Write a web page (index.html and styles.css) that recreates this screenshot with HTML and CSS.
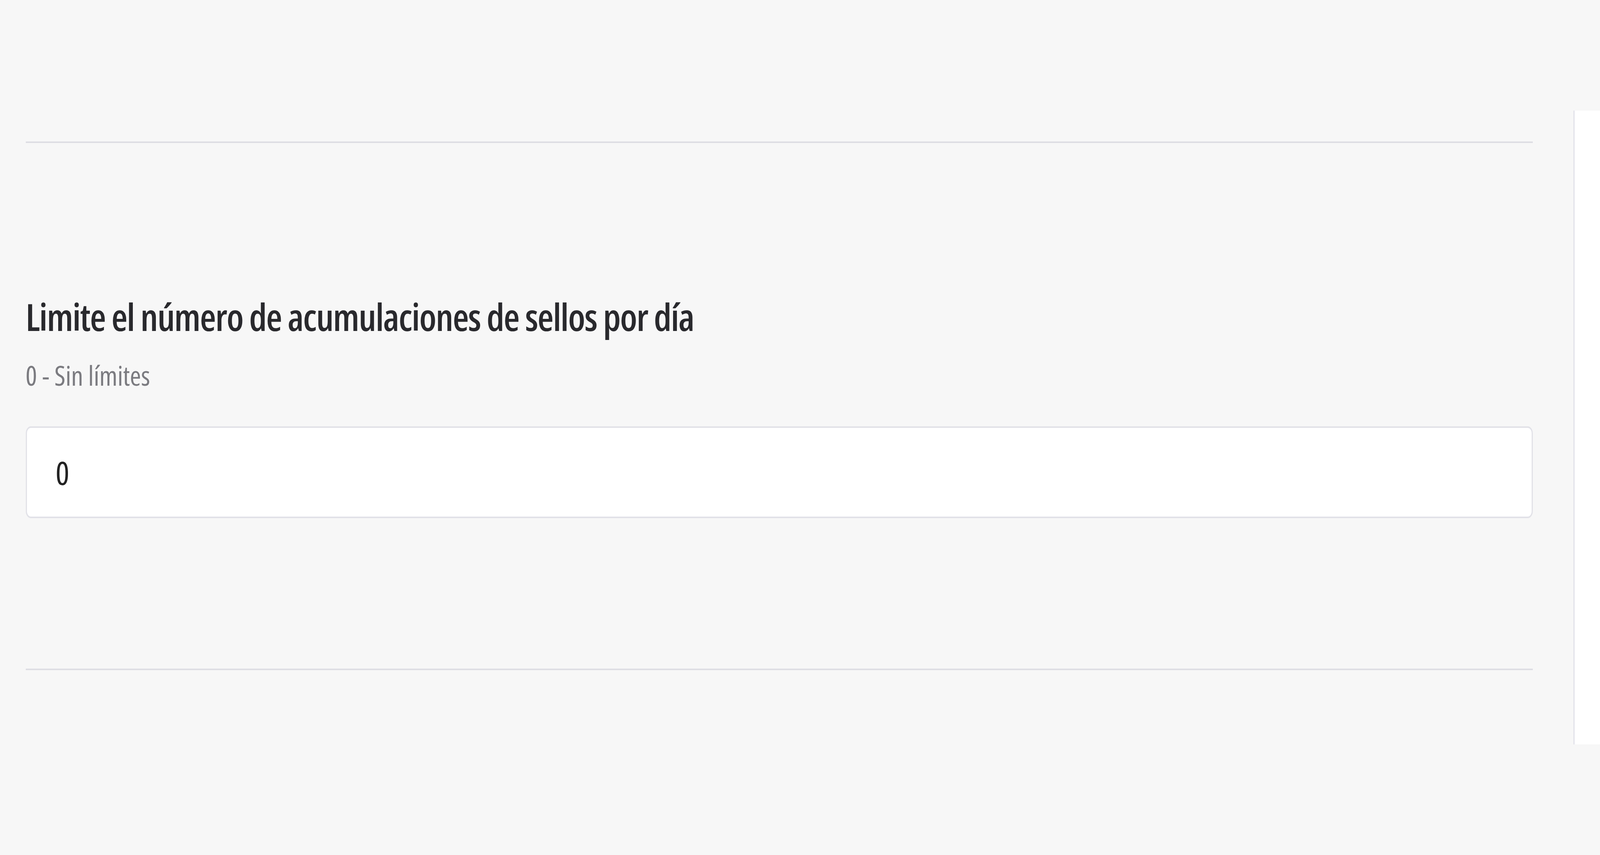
FILE: index.html
```
<!DOCTYPE html>
<html lang="es">

<head>
    <meta charset="UTF-8">
    <meta name="viewport" content="width=device-width, initial-scale=1.0">
    <title>Límite de sellos</title>
    <link rel="stylesheet" href="styles.css">
</head>

<body>

    <div class="layout">
        <main class="settings">
            <section class="setting">
                <label class="setting__title" for="limit">Limite el número de acumulaciones de sellos por día</label>
                <div class="setting__hint">0 - Sin límites</div>
                <input type="number" class="setting__input" id="limit" value="0">
            </section>
        </main>
        <aside class="side"></aside>
    </div>

</body>

</html>
```

FILE: styles.css
```
body {
    margin: 0;
    padding: 0;
    background-color: #f7f7f7;
    color: #29292d;
    font-family: 'Open Sans', 'Roboto', sans-serif;
    font-stretch: 75%;
}

.layout {
    display: flex;
    align-items: flex-start;
}

.settings {
    flex: 1;
    padding: 362px 0 0 1.6vw;
    margin-right: 2.54vw;
}

.setting {
    display: flex;
    flex-direction: column;
    border-top: 4px solid #dedee4;
    border-bottom: 4px solid #dedee4;
    padding: 384px 0 385px;
}

.setting__title {
    font-size: 95px;
    line-height: 120px;
    font-weight: 600;
    letter-spacing: -1.9px;
    color: #29292d;
}

.setting__hint {
    margin-top: 45px;
    font-size: 69px;
    line-height: 90px;
    color: #7b7b80;
}

.setting__input {
    margin-top: 86px;
    box-sizing: border-box;
    height: 235px;
    padding: 0 0 0 1.8vw;
    border: 4px solid #e2e2e8;
    border-left-width: 3px;
    border-right-width: 3px;
    border-radius: 0.32vw / 18px;
    background-color: #fff;
    font-family: inherit;
    font-stretch: inherit;
    font-size: 83px;
    color: #222;
    outline: none;
    -moz-appearance: textfield;
}

.setting__input::-webkit-outer-spin-button,
.setting__input::-webkit-inner-spin-button {
    -webkit-appearance: none;
    margin: 0;
}

.side {
    box-sizing: border-box;
    width: 1.67vw;
    height: 1622px;
    margin-top: 283px;
    border-left: 3px solid #e2e2ea;
    background-color: #fff;
}
```
